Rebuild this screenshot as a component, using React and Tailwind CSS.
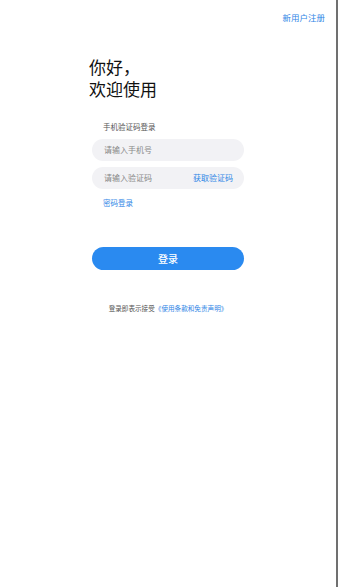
export default function App() {
    return (
        <div
            className="flex h-[587px] w-[338px] flex-col border-r-2 border-[#707070] bg-white"
            style={{ fontFamily: '"Noto Sans CJK SC", "Noto Sans", sans-serif' }}
        >
            <div className="flex justify-end pr-[11px] pt-[9px]">
                <span className="text-[8.5px] leading-[16px] text-[#2f86e6]">新用户注册</span>
            </div>
            <div className="flex flex-col px-[92px]">
                <div className="-ml-[3px] mt-[31px] flex flex-col text-[17px] leading-[22px] text-[#111]">
                    <span>你好，</span>
                    <span>欢迎使用</span>
                </div>
                <div className="ml-[11px] mt-[21px] text-[7.5px] leading-[12px] text-[#555]">手机验证码登录</div>
                <div className="mt-[6px] flex h-[22px] items-center rounded-full bg-[#f2f2f5] px-[12px] text-[8px] text-[#888]">
                    请输入手机号
                </div>
                <div className="mt-[6px] flex h-[22px] items-center justify-between rounded-full bg-[#f2f2f5] pl-[12px] pr-[11px] text-[8px]">
                    <span className="text-[#888]">请输入验证码</span>
                    <span className="text-[#2f86e6]">获取验证码</span>
                </div>
                <div className="ml-[11px] mt-[8px] text-[7.5px] leading-[12px] text-[#2f86e6]">密码登录</div>
                <button className="mt-[38px] flex h-[23px] items-center justify-center rounded-full bg-[#2a8af0] text-[10px] font-medium text-white">
                    登录
                </button>
            </div>
            <div className="mt-[33px] flex justify-center text-[6.6px] leading-[10px]">
                <span className="text-[#555]">登录即表示接受</span>
                <span className="text-[#2f86e6]">《使用条款和免责声明》</span>
            </div>
        </div>
    );
}
